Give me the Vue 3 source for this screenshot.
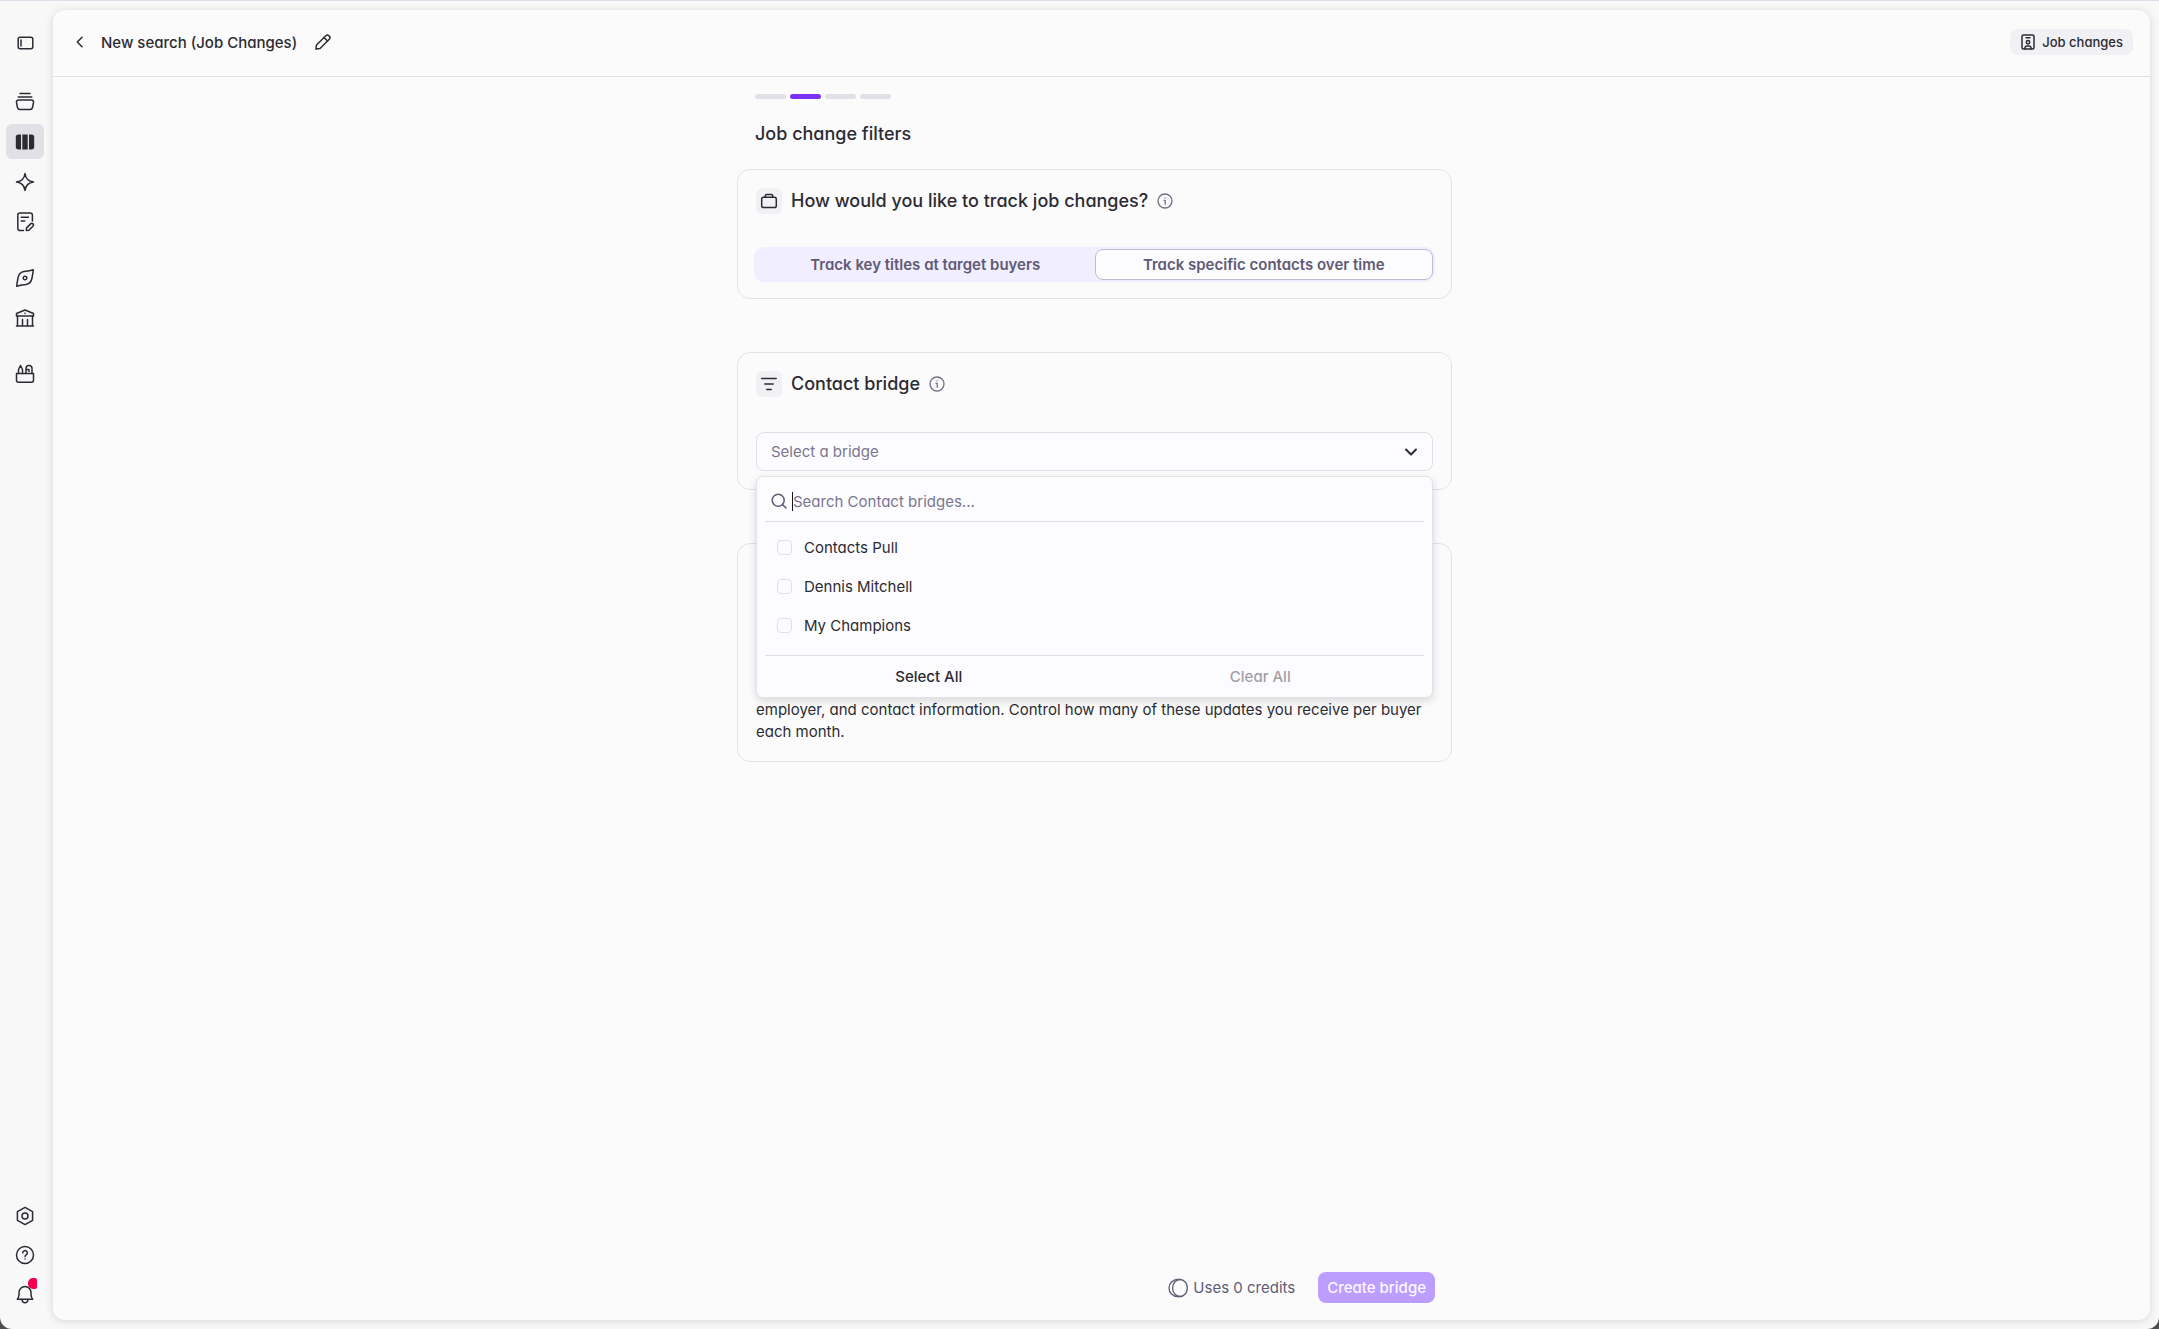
<template>
  <div class="app-shell">
    <aside class="sidebar">
      <button class="nav-item" aria-label="Toggle sidebar">
        <svg class="icon" viewBox="0 0 20 20">
          <rect x="3.2" y="4.2" width="14.6" height="11.6" rx="2" />
          <path d="M6 7v6" />
        </svg>
      </button>

      <nav class="nav-main">
        <div v-for="(group, index) in navGroups" :key="index" class="nav-group">
          <button
            v-for="item in group"
            :key="item.name"
            class="nav-item"
            :class="{ active: item.name === activeNav }"
            :aria-label="item.name"
            @click="activeNav = item.name"
          >
            <svg class="icon" viewBox="0 0 20 20">
              <path v-for="d in item.paths" :key="d" :d="d" :class="{ solid: item.solid }" />
            </svg>
          </button>
        </div>
      </nav>

      <div class="nav-group nav-bottom">
        <button class="nav-item" aria-label="Settings">
          <svg class="icon" viewBox="0 0 20 20">
            <path d="M10 1.4l7.6 4.3v8.6L10 18.6l-7.6-4.3V5.7z" />
            <circle cx="10" cy="10" r="3" />
          </svg>
        </button>
        <button class="nav-item" aria-label="Help">
          <svg class="icon" viewBox="0 0 20 20">
            <circle cx="10" cy="10" r="8.5" />
            <path d="M7.7 8a2.300 2.300 0 1 1 3.500 1.900c-.8.5-1.200.8-1.200 1.600" />
            <path d="M10 13.9v.1" />
          </svg>
        </button>
        <button class="nav-item" aria-label="Notifications">
          <svg class="icon" viewBox="0 0 20 20">
            <path d="M2.300 15.300h15.400c-1.200-1.300-1.700-2.700-1.700-5V8.500a6 6 0 0 0-12 0v1.800c0 2.300-.5 3.700-1.700 5z" />
            <path d="M7 15.500c.2 2 1.300 3.200 3 3.200s2.800-1.200 3-3.200" />
          </svg>
          <span class="nav-dot"></span>
        </button>
      </div>
    </aside>

    <main class="panel">
      <header class="panel-header">
        <button class="icon-btn" aria-label="Back">
          <svg class="icon" viewBox="0 0 18 18"><path d="M11 4.200L6.300 9l4.700 4.800" /></svg>
        </button>
        <h1 class="panel-title">New search (Job Changes)</h1>
        <button class="icon-btn" aria-label="Rename">
          <svg class="icon" viewBox="0 0 18 18">
            <path d="M1.900 16.100l.6-4.100L11.800 2.700a2.200 2.200 0 0 1 3.100 0l.4.4a2.200 2.200 0 0 1 0 3.100L6 15.500z" />
            <path d="M10 4.500L13.500 8" />
          </svg>
        </button>
        <span class="tag">
          <svg class="icon tag-icon" viewBox="0 0 16 16">
            <rect x="2" y="1" width="12" height="14" rx="1.500" />
            <path d="M6 3.700h4M5 15v-1.500a2 2 0 0 1 2-1.500h2a2 2 0 0 1 2 1.500V15" />
            <circle cx="8" cy="8.300" r="1.700" />
          </svg>
          Job changes
        </span>
      </header>

      <div class="content">
        <div class="steps">
          <span v-for="n in 4" :key="n" class="step" :class="{ current: n === 2 }"></span>
        </div>
        <h2 class="section-title">Job change filters</h2>

        <section class="card">
          <div class="card-heading">
            <span class="card-icon">
              <svg class="icon" viewBox="0 0 18 18">
                <rect x="1.700" y="5.200" width="14.600" height="10.300" rx="1.800" />
                <path d="M5.300 5V3.800a1.300 1.300 0 0 1 1.300-1.300h4.800a1.300 1.300 0 0 1 1.300 1.300V5" />
              </svg>
            </span>
            <h3>How would you like to track job changes?</h3>
            <svg class="icon info-icon" viewBox="0 0 16 16">
              <circle cx="8" cy="8" r="7" />
              <path d="M7 7.300h1.200v4M8 4.800v.1" />
            </svg>
          </div>
          <div class="segmented">
            <button
              v-for="mode in trackModes"
              :key="mode"
              class="segment"
              :class="{ selected: mode === trackMode }"
              @click="trackMode = mode"
            >
              {{ mode }}
            </button>
          </div>
        </section>

        <section class="card">
          <div class="card-heading">
            <span class="card-icon">
              <svg class="icon" viewBox="0 0 18 18"><path d="M1.800 3.500h14.400M4.800 9h8.400M6.800 14.500h4.400" /></svg>
            </span>
            <h3 id="bridge-heading">Contact bridge</h3>
            <svg class="icon info-icon" viewBox="0 0 16 16">
              <circle cx="8" cy="8" r="7" />
              <path d="M7 7.300h1.200v4M8 4.800v.1" />
            </svg>
          </div>
          <div class="bridge-field">
            <select class="bridge-select" aria-labelledby="bridge-heading">
              <option>Select a bridge</option>
            </select>
            <svg class="icon select-chevron" viewBox="0 0 14 14"><path d="M2 4.500l5 5 5-5" /></svg>

            <div class="bridge-menu">
              <div class="menu-search">
                <svg class="icon search-icon" viewBox="0 0 16 16">
                  <circle cx="7.200" cy="7.200" r="6" />
                  <path d="M11.600 11.600l3.400 3.400" />
                </svg>
                <span class="caret"></span>
                <input v-model="query" type="text" aria-label="Search Contact bridges" placeholder="Search Contact bridges..." />
              </div>
              <div class="menu-options">
                <label v-for="bridge in filteredBridges" :key="bridge" class="menu-option">
                  <input v-model="selected" type="checkbox" :value="bridge" />
                  {{ bridge }}
                </label>
              </div>
              <div class="menu-footer">
                <button @click="selected = [...bridges]">Select All</button>
                <button :disabled="!selected.length" @click="selected = []">Clear All</button>
              </div>
            </div>
          </div>
        </section>

        <section class="card updates-card">
          <p>
            employer, and contact information. Control how many of these updates you receive per buyer
            each month.
          </p>
        </section>

        <footer class="actions">
          <svg class="icon credits-icon" viewBox="0 0 20 20">
            <ellipse cx="12" cy="10" rx="7.400" ry="8.500" />
            <path d="M12 1.500H9.500C4.700 1.500 1 5.300 1 10s3.700 8.500 8.500 8.500H12" />
          </svg>
          <span class="credits">Uses 0 credits</span>
          <button class="create-btn">Create bridge</button>
        </footer>
      </div>
    </main>
  </div>
</template>

<script setup>
import { computed, ref } from 'vue'

const navGroups = [
  [
    { name: 'Collections', paths: ['M5 1.500h10M3.200 5h13.600', 'M3.500 8h13a2 2 0 0 1 2 2.500l-1 5a2.500 2.500 0 0 1-2.500 2H5a2.500 2.500 0 0 1-2.500-2l-1-5a2 2 0 0 1 2-2.500z'] },
    { name: 'Boards', solid: true, paths: ['M6 2.500v15H3.500a2.700 2.700 0 0 1-2.700-2.700V5.200a2.700 2.700 0 0 1 2.700-2.700z', 'M7.300 2.500h5.400v15H7.300z', 'M14 2.500h2.500a2.700 2.700 0 0 1 2.700 2.700v9.600a2.700 2.700 0 0 1-2.700 2.700H14z'] },
    { name: 'Assistant', paths: ['M10 1.500c.6 4.900 3.600 7.900 8.500 8.500-4.900.6-7.900 3.600-8.500 8.500-.6-4.900-3.600-7.900-8.500-8.500 4.900-.6 7.900-3.600 8.500-8.500z'] },
    { name: 'Notes', paths: ['M8.500 18.500H5a2.200 2.200 0 0 1-2.200-2.200V3.200A2.200 2.200 0 0 1 5 1h10.200a2.200 2.200 0 0 1 2.200 2.200V9', 'M6.200 5.200h7.300M6.200 9h3.500', 'M11.300 18.500l.3-2.600 4-4a1.600 1.600 0 0 1 2.300 2.300l-4 4z'] }
  ],
  [
    { name: 'Explore', paths: ['M18.300 1.700c-.2 3-.8 5.500-1.300 8.300-.7 4.200-2.500 6-6 6.500-3.500.4-6.500.8-9.300 1.800.2-3 .8-5.500 1.300-8.300.7-4.200 2.500-6 6-6.500 3.500-.4 6.500-.8 9.300-1.800z', 'M10 8.200a1.800 1.800 0 1 0 0 3.600 1.800 1.800 0 0 0 0-3.600z'] },
    { name: 'Institutions', paths: ['M1.500 5.500L10 2l8.500 3.500V8h-17z', 'M2.500 8v10M17.500 8v10M1.500 18h17M7.500 11.500V18M12.500 11.500V18M10 5.200v.2'] }
  ],
  [
    { name: 'Toolbox', paths: ['M1.500 9.500h17v6.700a2 2 0 0 1-2 2h-13a2 2 0 0 1-2-2z', 'M3.500 9.500V5.500l2-4 2 4v4', 'M11 9.500V4.500a3 3 0 0 1 6 0v5M11 5.500h3v2'] }
  ]
]
const activeNav = ref('Boards')

const trackModes = ['Track key titles at target buyers', 'Track specific contacts over time']
const trackMode = ref(trackModes[1])

const bridges = ['Contacts Pull', 'Dennis Mitchell', 'My Champions']
const selected = ref([])
const query = ref('')
const filteredBridges = computed(() =>
  bridges.filter((bridge) => bridge.toLowerCase().includes(query.value.toLowerCase()))
)
</script>

<style>
html,
body {
  background: #4d4d52;
}
</style>

<style scoped>
.app-shell,
.app-shell * {
  box-sizing: border-box;
}

.app-shell {
  display: flex;
  height: 100vh;
  padding: 9px 9px 9px 0;
  border-top: 1px solid #e6dcea;
  border-radius: 0 0 12px 12px;
  background: #f8f8f8;
  color: #2c2b33;
  font-family: Inter, 'Liberation Sans', sans-serif;
  font-feature-settings: 'cv11';
  font-size: 15px;
}

button,
input,
select {
  margin: 0;
  padding: 0;
  border: none;
  background: none;
  color: inherit;
  font: inherit;
  font-feature-settings: inherit;
}

button {
  cursor: pointer;
}

h1,
h2,
h3,
p {
  margin: 0;
  font-weight: 500;
}

.icon {
  display: block;
  width: 20px;
  height: 20px;
  flex-shrink: 0;
  fill: none;
  stroke: currentColor;
  stroke-width: 1.5;
  stroke-linecap: round;
  stroke-linejoin: round;
}

.icon .solid {
  fill: currentColor;
  stroke: none;
}

.sidebar {
  display: flex;
  flex-direction: column;
  width: 53px;
  padding: 15px 0 0 6px;
}

.nav-item {
  position: relative;
  display: flex;
  align-items: center;
  justify-content: center;
  width: 38px;
  height: 35px;
  border-radius: 6px;
}

.nav-item.active {
  background: #e1e0e7;
}

.nav-main {
  display: flex;
  flex-direction: column;
  gap: 21px;
  margin-top: 24px;
}

.nav-group {
  display: flex;
  flex-direction: column;
  gap: 5px;
}

.nav-bottom {
  gap: 4px;
  margin-top: auto;
  padding-bottom: 9px;
}

.nav-dot {
  position: absolute;
  top: 2px;
  right: 7px;
  width: 9px;
  height: 11px;
  border-radius: 5px 2px 2px 5px;
  background: #f5004f;
}

.panel {
  display: flex;
  flex-direction: column;
  flex: 1;
  min-width: 0;
  border-radius: 12px;
  background: #fbfbfb;
  box-shadow: 0 1px 8px rgba(0, 0, 0, 0.14);
}

.panel-header {
  display: flex;
  align-items: center;
  height: 67px;
  padding: 0 17px 2px 18px;
  border-bottom: 1px solid #e0e0e6;
}

.icon-btn {
  display: flex;
}

.icon-btn .icon {
  width: 18px;
  height: 18px;
}

.panel-title {
  margin: 0 17px 0 12px;
  font-size: 15px;
}

.tag {
  display: flex;
  align-items: center;
  gap: 6px;
  height: 26px;
  margin-left: auto;
  padding: 0 10px;
  border-radius: 8px;
  background: #f1f0f5;
  font-size: 13px;
  font-weight: 500;
}

.tag-icon {
  width: 16px;
  height: 16px;
}

.content {
  display: flex;
  flex-direction: column;
  flex: 1;
  width: 715px;
  max-width: 100%;
  margin-left: calc((100% - 729px) / 2);
  padding: 17px 0;
}

.steps {
  display: flex;
  gap: 4px;
  padding-left: 18px;
}

.step {
  width: 31px;
  height: 5px;
  border-radius: 3px;
  background: #e1e0e7;
}

.step.current {
  background: #7a33ff;
}

.section-title {
  margin: 23px 18px;
  font-size: 18px;
  line-height: 24px;
}

.card {
  margin-bottom: 53px;
  padding: 18px;
  border: 1px solid #e3e2e9;
  border-radius: 13px;
}

.card-heading {
  display: flex;
  align-items: center;
  gap: 9px;
  margin-bottom: 33px;
}

.card-heading h3 {
  font-size: 18px;
  line-height: 26px;
}

.card-icon {
  display: flex;
  align-items: center;
  justify-content: center;
  width: 26px;
  height: 26px;
  border-radius: 6px;
  background: #f1f0f5;
}

.card-icon .icon {
  width: 18px;
  height: 18px;
}

.info-icon {
  width: 16px;
  height: 16px;
  color: #757089;
  stroke-width: 1.3;
}

.segmented {
  display: flex;
  margin: 0 -2px -2px;
  padding: 2px;
  border-radius: 10px;
  background: #f1eeff;
}

.segment {
  flex: 1;
  height: 31px;
  border: 1px solid transparent;
  border-radius: 8px;
  color: #605b75;
  font-size: 15px;
  font-weight: 600;
}

.segment.selected {
  border-color: #bfbccd;
  background: #fcfcfe;
}

.bridge-field {
  position: relative;
  margin-top: 35px;
}

.card-heading:has(+ .bridge-field) {
  margin-bottom: 0;
}

.bridge-select {
  display: block;
  width: 100%;
  height: 39px;
  padding: 0 14px;
  border: 1px solid #dfdee8;
  border-radius: 8px;
  background: #fcfcfe;
  color: #7b7690;
  appearance: none;
}

.select-chevron {
  position: absolute;
  top: 13px;
  right: 15px;
  width: 14px;
  height: 14px;
  stroke-width: 2;
  pointer-events: none;
}

.bridge-menu {
  position: absolute;
  top: 44px;
  left: 0;
  right: 0;
  padding: 0 8px;
  border: 1px solid #e3e2e9;
  border-radius: 7px;
  background: #fcfcfe;
  box-shadow: 0 3px 8px rgba(0, 0, 0, 0.14);
}

.menu-search {
  display: flex;
  align-items: center;
  height: 45px;
  padding: 4px 7px 0 6px;
  border-bottom: 1px solid #dfdee5;
}

.search-icon {
  width: 16px;
  height: 16px;
  margin-right: 5px;
  color: #605b75;
}

.caret {
  width: 1px;
  height: 19px;
  background: #17161c;
}

.menu-search input {
  flex: 1;
  outline: none;
}

.menu-search input::placeholder {
  color: #7b7690;
  opacity: 1;
}

.menu-options {
  display: flex;
  flex-direction: column;
  gap: 1px;
  padding: 6px 12px 11px;
}

.menu-option {
  display: flex;
  align-items: center;
  gap: 12px;
  height: 38px;
  cursor: pointer;
}

.menu-option input {
  width: 15px;
  height: 15px;
  border: 1px solid #e1e0e7;
  border-radius: 4px;
  appearance: none;
}

.menu-option input:checked {
  border-color: #7a33ff;
  background: #7a33ff;
}

.menu-footer {
  display: flex;
  gap: 4px;
  height: 42px;
  border-top: 1px solid #dfdee5;
}

.menu-footer button {
  flex: 1;
  font-weight: 500;
}

.menu-footer button:disabled {
  color: #a09fa5;
}

.updates-card {
  display: flex;
  align-items: flex-end;
  min-height: 219px;
}

.updates-card p {
  font-weight: 400;
  line-height: 22px;
}

.actions {
  display: flex;
  align-items: center;
  justify-content: flex-end;
  margin-top: auto;
  padding-right: 17px;
  color: #605b75;
}

.credits-icon {
  stroke-width: 1.3;
}

.credits {
  margin: 0 23px 0 5px;
}

.create-btn {
  height: 31px;
  padding: 0 9px;
  border-radius: 8px;
  background: #bb9eff;
  color: #fbf8ff;
  font-weight: 500;
}
</style>
